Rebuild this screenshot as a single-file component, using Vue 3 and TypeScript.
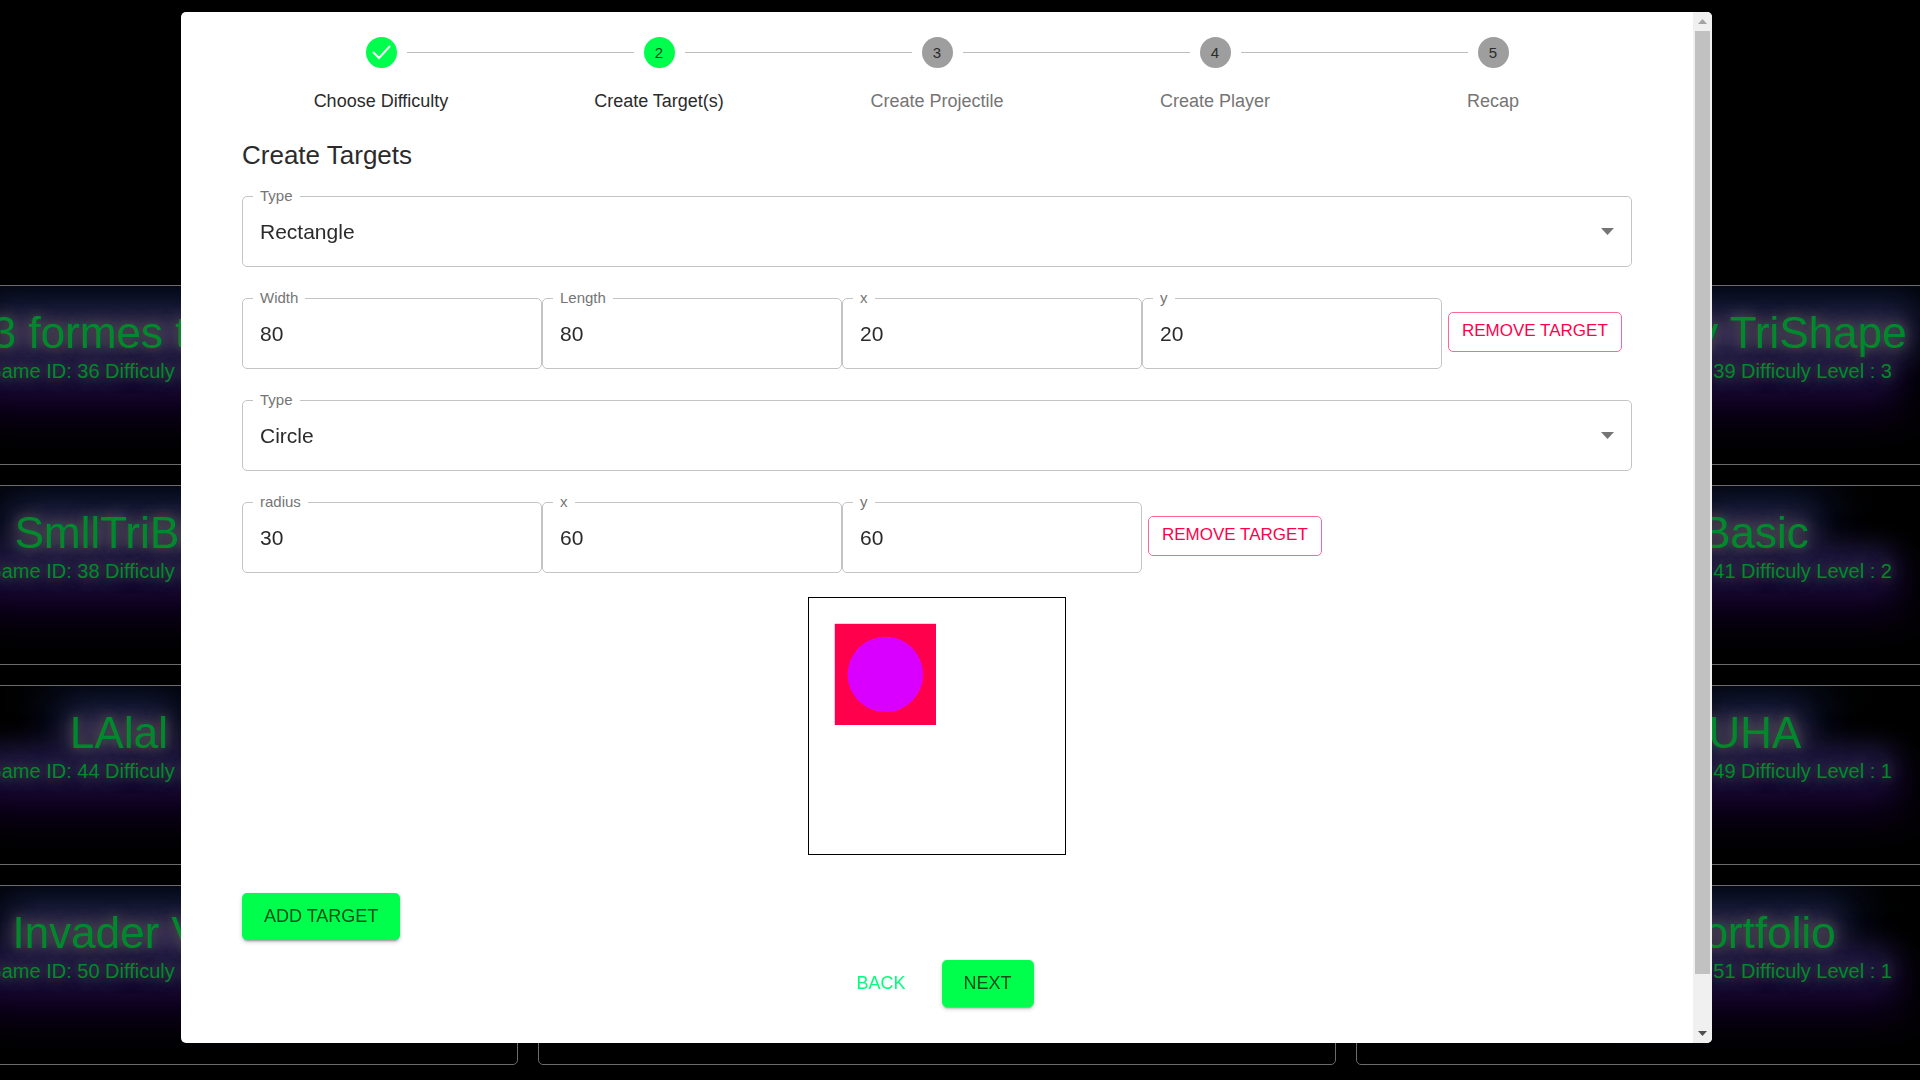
<script setup lang="ts">
import { ref } from 'vue'

interface Game {
  title: string
  id: number
  level: number
}

interface Field {
  name: string
  value: number
}

interface Target {
  type: string
  fields: Field[]
}

const games: (Game | null)[] = [
  { title: '3 formes test', id: 36, level: 1 },
  null,
  { title: 'Crazy TriShape', id: 39, level: 3 },
  { title: 'SmllTriBall', id: 38, level: 1 },
  null,
  { title: 'Basic', id: 41, level: 2 },
  { title: 'LAlal', id: 44, level: 1 },
  null,
  { title: 'UHA', id: 49, level: 1 },
  { title: 'Invader V2', id: 50, level: 1 },
  null,
  { title: 'Portfolio', id: 51, level: 1 },
]

const steps = ['Choose Difficulty', 'Create Target(s)', 'Create Projectile', 'Create Player', 'Recap']
const activeStep = ref(1)

const targets = ref<Target[]>([
  {
    type: 'Rectangle',
    fields: [
      { name: 'Width', value: 80 },
      { name: 'Length', value: 80 },
      { name: 'x', value: 20 },
      { name: 'y', value: 20 },
    ],
  },
  {
    type: 'Circle',
    fields: [
      { name: 'radius', value: 30 },
      { name: 'x', value: 60 },
      { name: 'y', value: 60 },
    ],
  },
])

function addTarget() {
  targets.value.push({
    type: 'Circle',
    fields: [
      { name: 'radius', value: 10 },
      { name: 'x', value: 0 },
      { name: 'y', value: 0 },
    ],
  })
}

function removeTarget(index: number) {
  targets.value.splice(index, 1)
}
</script>

<template>
  <div class="page">
    <main class="games">
      <article v-for="(game, i) in games" :key="i" class="card">
        <template v-if="game">
          <h2 class="card-title">{{ game.title }}</h2>
          <p class="card-info">Game ID: {{ game.id }} Difficuly Level : {{ game.level }}</p>
        </template>
      </article>
    </main>

    <div class="overlay">
      <section class="modal" role="dialog" aria-label="Create Targets">
        <div class="content">
          <ol class="stepper">
            <li
              v-for="(step, i) in steps"
              :key="step"
              class="step"
              :class="{ reached: i <= activeStep }"
            >
              <div class="step-head">
                <span class="line" :class="{ hidden: i === 0 }"></span>
                <span class="dot">
                  <svg v-if="i < activeStep" width="31" height="31" viewBox="0 0 31 31">
                    <path d="M7 15 L13 21 L24 9" fill="none" stroke="#fff" stroke-width="2" />
                  </svg>
                  <template v-else>{{ i + 1 }}</template>
                </span>
                <span class="line" :class="{ hidden: i === steps.length - 1 }"></span>
              </div>
              <span class="step-label">{{ step }}</span>
            </li>
          </ol>

          <h1 class="heading">Create Targets</h1>

          <div v-for="(target, t) in targets" :key="t" class="target">
            <div class="field">
              <label :for="`type-${t}`">Type</label>
              <select :id="`type-${t}`" v-model="target.type">
                <option>Rectangle</option>
                <option>Circle</option>
              </select>
              <svg class="arrow" width="13" height="7" viewBox="0 0 13 7">
                <path d="M0 0 H13 L6.500 7 Z" fill="#757575" />
              </svg>
            </div>
            <div class="row">
              <div v-for="field in target.fields" :key="field.name" class="field part">
                <label :for="`${field.name}-${t}`">{{ field.name }}</label>
                <input :id="`${field.name}-${t}`" v-model="field.value" type="text" />
              </div>
              <button type="button" class="remove" @click="removeTarget(t)">REMOVE TARGET</button>
            </div>
          </div>

          <svg class="preview" width="258" height="258" viewBox="0 0 258 258">
            <rect x="26" y="26" width="102" height="102" fill="#ff004c" />
            <circle cx="77" cy="77" r="38" fill="#d900ff" />
          </svg>

          <button type="button" class="filled" @click="addTarget">ADD TARGET</button>

          <div class="actions">
            <button type="button" class="plain">BACK</button>
            <button type="button" class="filled">NEXT</button>
          </div>
        </div>

        <div class="scrollbar" aria-hidden="true">
          <svg width="19" height="19" viewBox="0 0 19 19">
            <path d="M5 12 L9.500 7 L14 12 Z" fill="#a3a3a3" />
          </svg>
          <div class="track"><div class="thumb"></div></div>
          <svg width="19" height="19" viewBox="0 0 19 19">
            <path d="M5 7 L14 7 L9.500 12 Z" fill="#505050" />
          </svg>
        </div>
      </section>
    </div>
  </div>
</template>

<style>
body {
  margin: 0;
  background: #000;
}
</style>

<style scoped>
* {
  box-sizing: border-box;
}

.page {
  min-height: 100vh;
  overflow: hidden;
  background: #000;
  color: #2b2b2b;
  font-family: 'Liberation Sans', Arial, sans-serif;
}

.games {
  display: grid;
  grid-template-columns: repeat(3, 1fr);
  grid-auto-rows: 180px;
  gap: 20px;
  margin: 285px -234px 0 -280px;
}

.card {
  display: flex;
  flex-direction: column;
  align-items: center;
  isolation: isolate;
  overflow: hidden;
  padding-top: 20px;
  border: 1px solid #6c6c6c;
  border-radius: 5px;
  color: #00892c;
}

.card-title,
.card-info {
  position: relative;
  margin: 0;
}

.card-title {
  font-size: 44px;
  font-weight: 400;
  line-height: 54px;
  text-shadow:
    0 0 9px #444,
    0 0 16px #4a4a4a;
}

.card-info {
  padding-left: 4px;
  font-size: 20px;
  line-height: 23px;
  text-shadow:
    0 0 9px #383838,
    0 0 18px #3c3c48;
}

/* coloured neon haze behind both lines of a card */
.card-title::before,
.card-title::after,
.card-info::before,
.card-info::after {
  position: absolute;
  z-index: -1;
  content: '';
}

.card-title::before {
  inset: 12px 0 8px;
  background: #46385f;
  filter: blur(14px);
}

.card-title::after {
  z-index: -2;
  inset: -20px -20px 0;
  background: #0c1430;
  filter: blur(24px);
}

.card-info::before {
  inset: -10px 0 0;
  background: #25214a;
  filter: blur(14px);
}

.card-info::after {
  z-index: -2;
  inset: 0 -10px -30px;
  background: #14002c;
  filter: blur(20px);
}

.overlay {
  position: fixed;
  inset: 0;
  display: flex;
  padding: 12px 208px 37px 181px;
}

.modal {
  display: flex;
  flex: 1;
  overflow: hidden;
  border-radius: 5px;
  background: #fff;
}

.content {
  display: flex;
  flex: 1;
  flex-direction: column;
  padding: 25px 61px 0;
}

.stepper {
  display: flex;
  margin: 0;
  padding: 0;
  list-style: none;
}

.step {
  display: flex;
  flex: 1;
  flex-direction: column;
  align-items: center;
  color: #757575;
}

.step-head {
  display: flex;
  align-items: center;
  align-self: stretch;
  gap: 10px;
}

.line {
  flex: 1;
  height: 1px;
  background: #bdbdbd;
}

.hidden {
  visibility: hidden;
}

.dot {
  display: flex;
  align-items: center;
  justify-content: center;
  width: 31px;
  height: 31px;
  border-radius: 50%;
  background: #9e9e9e;
  color: #2b2b2b;
  font-size: 15px;
}

.reached .dot {
  background: #00ff4c;
  color: #064d1b;
}

.step-label {
  margin-top: 20px;
  font-size: 18px;
  line-height: 26px;
}

.reached {
  color: #2b2b2b;
}

.heading {
  margin: 24px 0;
  font-size: 26px;
  font-weight: 400;
  line-height: 34px;
}

.target {
  display: flex;
  flex-direction: column;
  gap: 31px;
  margin-bottom: 31px;
}

.field {
  position: relative;
  height: 71px;
}

.field label {
  position: absolute;
  top: -9px;
  left: 11px;
  padding: 0 7px;
  background: #fff;
  color: #757575;
  font-size: 15px;
  line-height: 18px;
}

.field select,
.field input {
  width: 100%;
  height: 100%;
  margin: 0;
  padding: 0 17px;
  border: 1px solid #c4c4c4;
  border-radius: 5px;
  outline: none;
  appearance: none;
  background: #fff;
  color: #2b2b2b;
  font-family: inherit;
  font-size: 21px;
}

.arrow {
  position: absolute;
  top: 32px;
  right: 18px;
  pointer-events: none;
}

.row {
  display: flex;
}

.part {
  flex: 0 1 300px;
}

button {
  border: 0;
  border-radius: 5px;
  background: none;
  font-family: inherit;
  font-size: 18px;
  cursor: pointer;
}

.remove {
  height: 40px;
  margin: 14px 0 0 6px;
  padding: 0 13px 2px;
  border: 1px solid #ff6694;
  color: #ff004c;
  font-size: 17px;
}

.preview {
  align-self: center;
  margin-top: -7px;
  border: 1px solid #000;
}

.filled {
  align-self: flex-start;
  height: 47px;
  padding: 0 22px;
  background: #00ff4c;
  box-shadow:
    0 3px 2px -2px rgba(0, 0, 0, 0.3),
    0 2px 4px rgba(0, 0, 0, 0.2);
  color: #064d1b;
}

.content > .filled {
  margin-top: 38px;
}

.actions {
  display: flex;
  justify-content: center;
  gap: 24px;
  margin-top: 20px;
  padding-left: 4px;
}

.plain {
  padding: 0 12px;
  color: #00ff7b;
}

.scrollbar {
  display: flex;
  flex-direction: column;
  width: 19px;
  background: #f0f0f0;
}

.track {
  flex: 1;
  padding: 0 2px;
}

.thumb {
  height: 95%;
  background: #c1c1c1;
}
</style>
